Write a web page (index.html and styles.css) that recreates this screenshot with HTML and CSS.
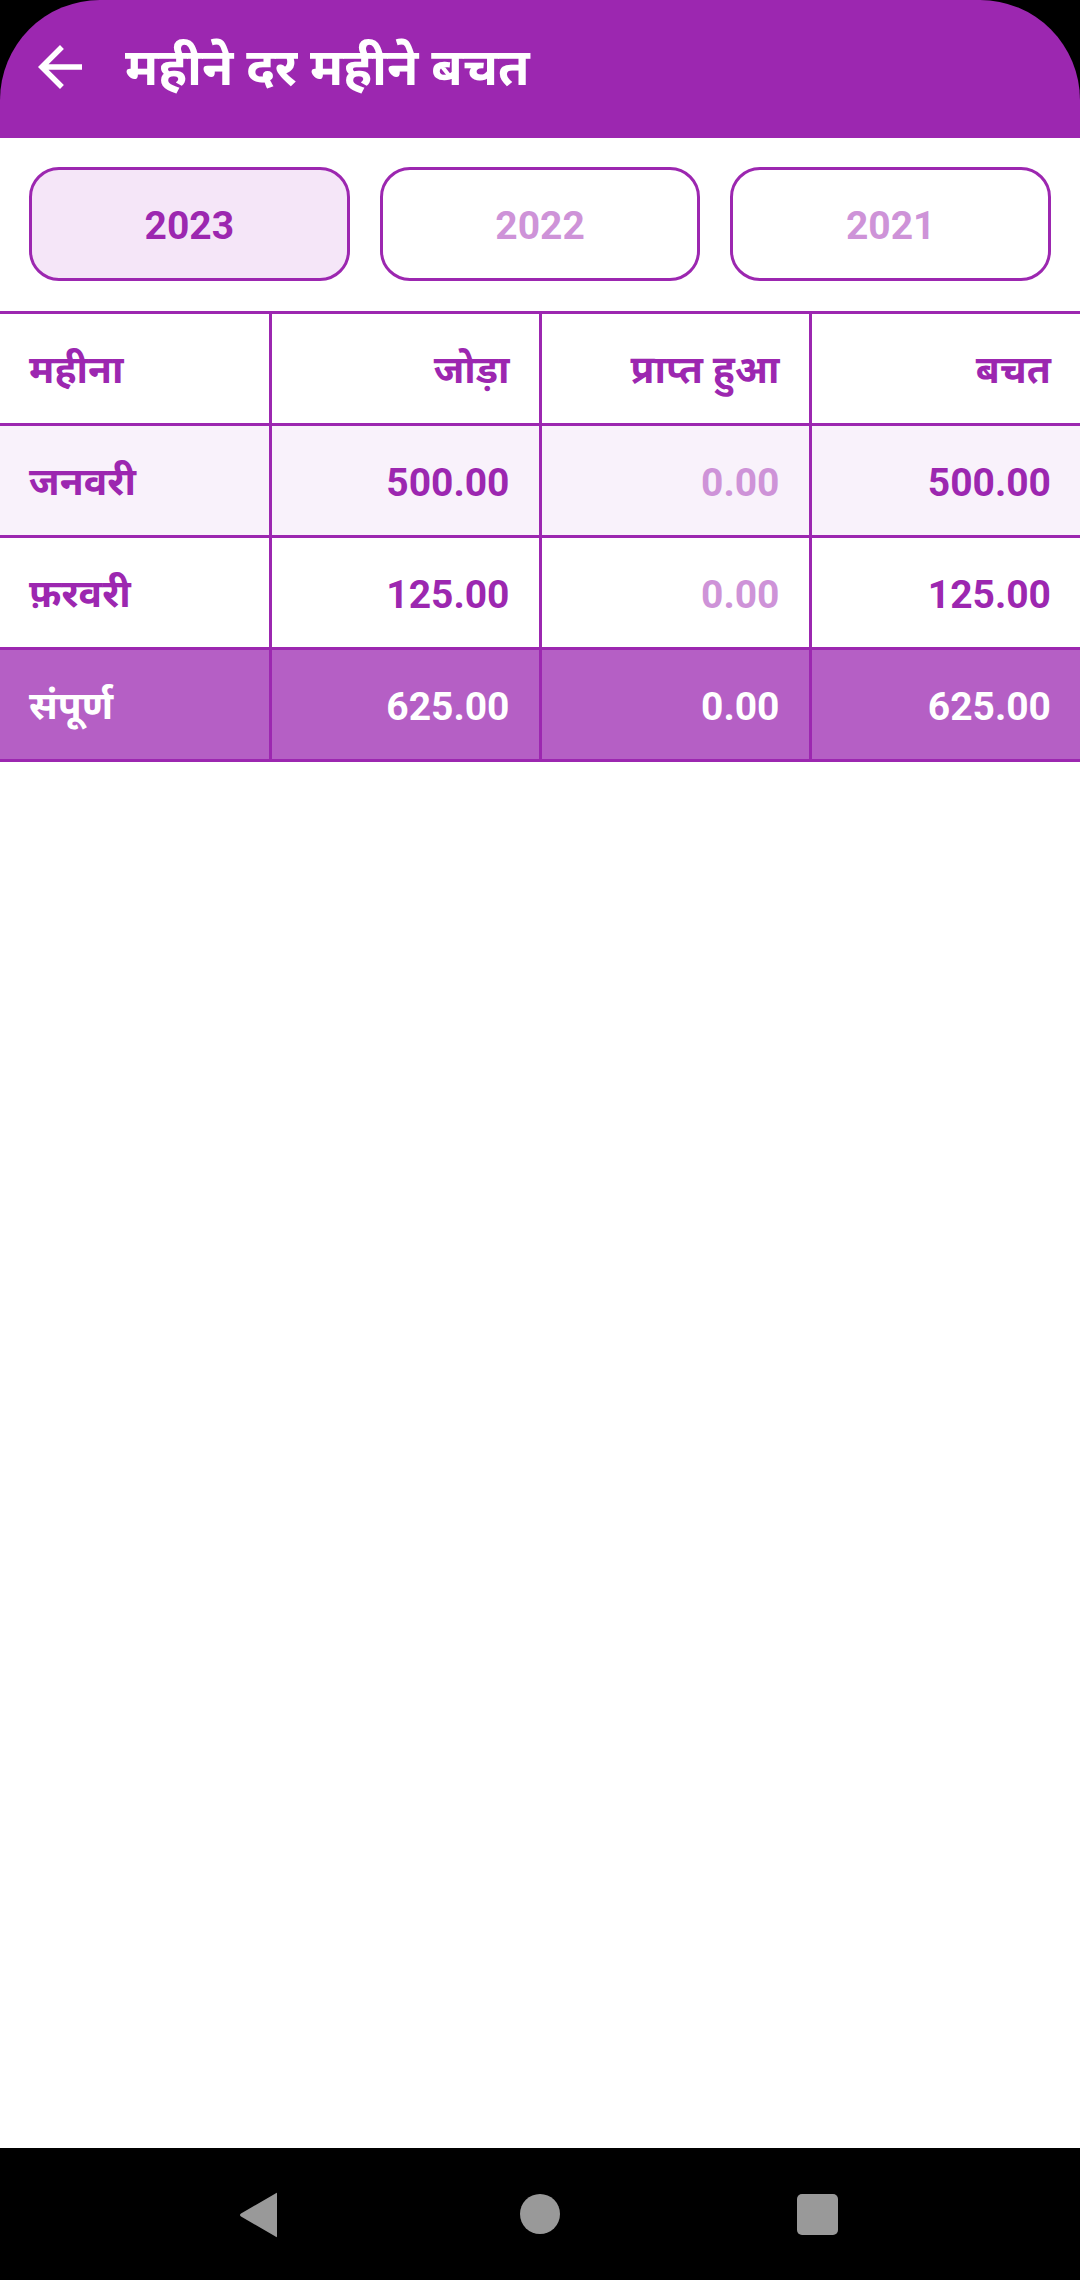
FILE: index.html
```html
<!DOCTYPE html>
<html lang="hi">
<head>
<meta charset="utf-8">
<title>महीने दर महीने बचत</title>
<link rel="stylesheet" href="styles.css">
</head>
<body>
<div class="screen">
  <header class="appbar">
    <svg class="back" viewBox="0 0 24 24" width="66" height="66"><path d="M20 11H7.83l5.59-5.59L12 4l-8 8 8 8 1.41-1.41L7.83 13H20v-2z" fill="#fff"/></svg>
    <h1 class="title">महीने दर महीने बचत</h1>
  </header>
  <main class="content">
    <div class="years">
      <button class="year active">2023</button>
      <button class="year">2022</button>
      <button class="year">2021</button>
    </div>
    <table class="grid">
      <tr class="head">
        <td class="left">महीना</td>
        <td>जोड़ा</td>
        <td>प्राप्त हुआ</td>
        <td>बचत</td>
      </tr>
      <tr class="odd">
        <td class="left">जनवरी</td>
        <td>500.00</td>
        <td class="muted">0.00</td>
        <td>500.00</td>
      </tr>
      <tr>
        <td class="left">फ़रवरी</td>
        <td>125.00</td>
        <td class="muted">0.00</td>
        <td>125.00</td>
      </tr>
      <tr class="total">
        <td class="left">संपूर्ण</td>
        <td>625.00</td>
        <td>0.00</td>
        <td>625.00</td>
      </tr>
    </table>
  </main>
  <nav class="navbar">
    <svg class="nav-back" viewBox="0 0 40 46" width="40" height="46"><path d="M38 2 L38 44 Q38 46 36.5 44.5 L2 24.5 Q0 23 2 21.5 L36.5 1.5 Q38 0 38 2 Z" fill="#999"/></svg>
    <span class="nav-home"></span>
    <span class="nav-recent"></span>
  </nav>
</div>
</body>
</html>
```
FILE: styles.css
```css
html, body {
  margin: 0;
  padding: 0;
  background: #000;
}
.screen {
  width: 1080px;
  height: 2280px;
  display: flex;
  flex-direction: column;
  background: #000;
  font-family: Roboto, "Noto Sans Devanagari", "Noto Sans", sans-serif;
}
.appbar {
  height: 138px;
  flex: none;
  background: #9c27b0;
  border-radius: 100px 100px 0 0;
  display: flex;
  align-items: center;
  padding-left: 27px;
  box-sizing: border-box;
}
.back {
  flex: none;
  margin-top: -4px;
}
.title {
  margin: -4px 0 0 32px;
  color: #fff;
  font-size: 51px;
  font-weight: 700;
  line-height: 1;
}
.content {
  flex: 1;
  background: #fff;
}
.years {
  display: flex;
  gap: 30px;
  padding: 29px 29px 0 29px;
  height: 114px;
}
.year {
  flex: 1;
  height: 114px;
  border: 3px solid #9c27b0;
  border-radius: 30px;
  background: #fff;
  color: #ce93d8;
  font-family: Roboto, sans-serif;
  font-weight: 700;
  font-size: 39px;
  padding: 4px 0 0 0;
}
.year.active {
  background: #f5e6f8;
  color: #9c27b0;
}
.grid {
  margin-top: 30px;
  width: 1080px;
  border-collapse: collapse;
  table-layout: fixed;
}
.grid td {
  height: 112px;
  border: 3px solid #9c27b0;
  padding: 4px 29px 0 29px;
  text-align: right;
  color: #9c27b0;
  font-weight: 700;
  font-size: 39px;
  box-sizing: border-box;
}
.grid td:first-child { border-left: none; }
.grid td:last-child { border-right: none; }
.grid td.left { text-align: left; padding-top: 8px; }
.grid .head td { padding-top: 8px; }
.grid .odd td { background: #f9f2fb; }
.grid td.muted { color: #ce93d8; }
.grid .total td { background: #b55fc5; color: #fff; }
.navbar {
  height: 132px;
  flex: none;
  background: #000;
  display: flex;
  align-items: center;
  position: relative;
}
.nav-back {
  position: absolute;
  left: 239px;
  top: 44px;
}
.nav-home {
  position: absolute;
  left: 520px;
  top: 46px;
  width: 40px;
  height: 40px;
  border-radius: 50%;
  background: #999;
}
.nav-recent {
  position: absolute;
  left: 797px;
  top: 46px;
  width: 41px;
  height: 41px;
  border-radius: 5px;
  background: #999;
}
```
